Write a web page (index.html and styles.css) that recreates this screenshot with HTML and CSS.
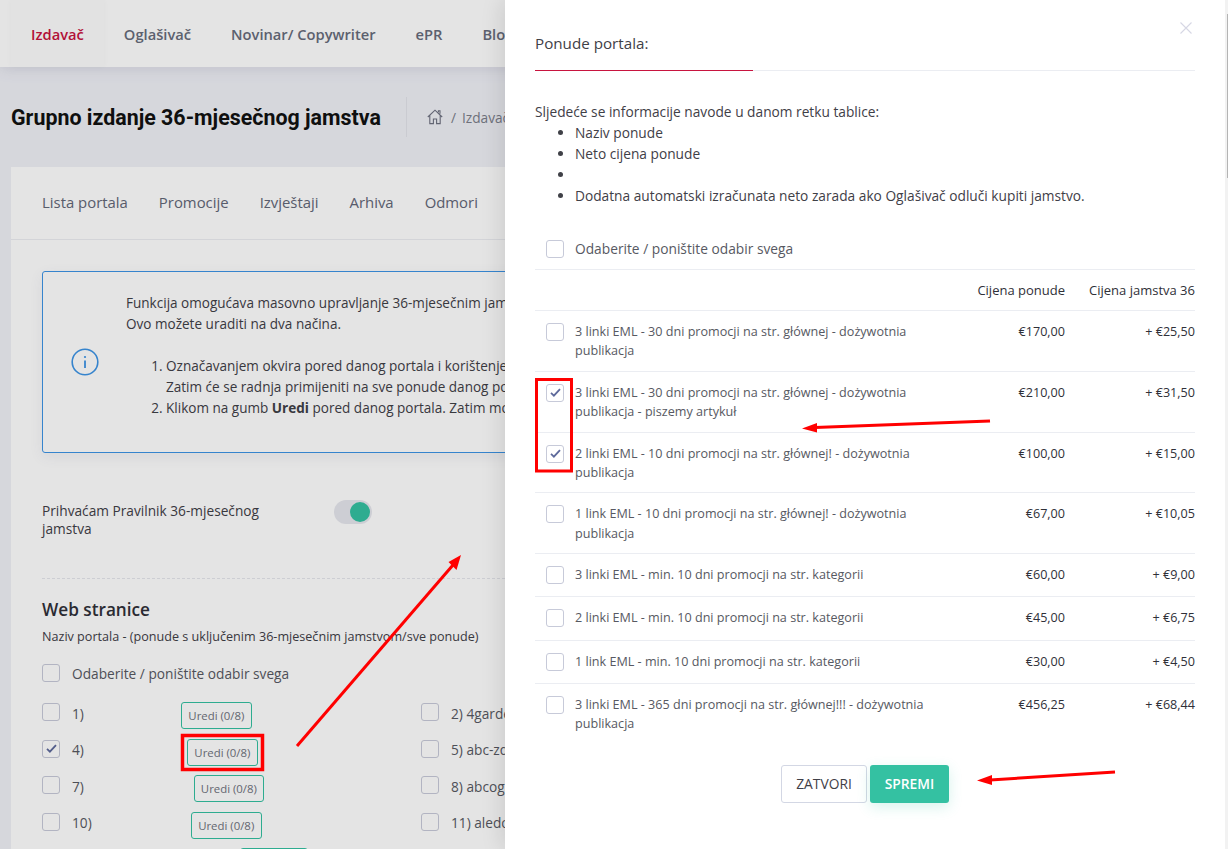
FILE: index.html
```html
<!DOCTYPE html>
<html lang="hr">
<head>
<meta charset="utf-8">
<title>Grupno izdanje 36-mjesečnog jamstva</title>
<link rel="stylesheet" href="styles.css">
</head>
<body>
<div class="page">
  <header class="topbar">
    <a class="topnav active">Izdavač</a>
    <a class="topnav">Oglašivač</a>
    <a class="topnav">Novinar/ Copywriter</a>
    <a class="topnav">ePR</a>
    <a class="topnav">Blog</a>
  </header>
  <div class="subheader">
    <h1 class="page-title">Grupno izdanje 36-mjesečnog jamstva</h1>
    <div class="crumbs">
      <svg class="home" viewBox="0 0 16 16" width="16" height="16"><path d="M.8 8 8 1.2 15.2 8M2.8 6.6V14.6H6.4V10H9.6V14.6H13.2V6.6M11.4 3.2V1.8H13V4.8" fill="none" stroke="currentColor" stroke-width="1.1"/></svg>
      <span>/</span><span>Izdavač</span>
    </div>
  </div>
  <main class="card">
    <nav class="tabs">
      <a>Lista portala</a><a>Promocije</a><a>Izvještaji</a><a>Arhiva</a><a>Odmori</a>
    </nav>
    <div class="card-body">
      <section class="alert">
        <div class="alert-icon">
          <svg viewBox="0 0 28 28" width="28" height="28"><circle cx="14" cy="14" r="12.8" fill="none" stroke="currentColor" stroke-width="1.6"/><path d="M14 12.5V20" stroke="currentColor" stroke-width="1.8"/><circle cx="14" cy="9" r="1.1" fill="currentColor"/></svg>
        </div>
        <div class="alert-text">
          <p>Funkcija omogućava masovno upravljanje 36-mjesečnim jamstvom na portalima.<br>Ovo možete uraditi na dva načina.</p>
          <ol>
            <li>Označavanjem okvira pored danog portala i korištenjem opcije ispod.<br>Zatim će se radnja primijeniti na sve ponude danog portala.</li>
            <li>Klikom na gumb <b>Uredi</b> pored danog portala. Zatim možete odabrati ponude.</li>
          </ol>
        </div>
      </section>
      <div class="accept">
        <label class="accept-label">Prihvaćam Pravilnik 36-mjesečnog jamstva</label>
        <span class="switch"><i></i></span>
      </div>
      <h2 class="section-title">Web stranice</h2>
      <p class="section-sub">Naziv portala - (ponude s uključenim 36-mjesečnim jamstvom/sve ponude)</p>
      <div class="check-row select-all"><span class="cb"></span><span>Odaberite / poništite odabir svega</span></div>
      <div class="portals">
        <div class="portal"><span class="cb"></span><span class="pname">1)</span><button class="edit e1">Uredi (0/8)</button></div>
        <div class="portal"><span class="cb"></span><span class="pname">2) 4gardeners.pl</span></div>
        <div class="portal"><span class="cb on"><svg viewBox="0 0 12 10" width="11" height="9"><path d="M1 5.5 4.2 8.5 11 1.2" fill="none" stroke="currentColor" stroke-width="2"/></svg></span><span class="pname">4)</span><button class="edit e2">Uredi (0/8)</button></div>
        <div class="portal"><span class="cb"></span><span class="pname">5) abc-zdrowie.pl</span></div>
        <div class="portal"><span class="cb"></span><span class="pname">7)</span><button class="edit e3">Uredi (0/8)</button></div>
        <div class="portal"><span class="cb"></span><span class="pname">8) abcogrodu.pl</span></div>
        <div class="portal"><span class="cb"></span><span class="pname">10)</span><button class="edit e4">Uredi (0/8)</button></div>
        <div class="portal"><span class="cb"></span><span class="pname">11) aledobre.pl</span></div>
        <div class="portal"><span class="cb"></span><span class="pname"></span><button class="edit e5" aria-label="Uredi"></button></div>
      </div>
    </div>
  </main>

  <div class="backdrop"></div>

  <aside class="panel">
    <div class="panel-inner">
      <button class="close" aria-label="Zatvori"><svg viewBox="0 0 12 12" width="12" height="12"><path d="M.5.5 11.500 11.500M11.500.5 .5 11.500" stroke="currentColor" stroke-width="1.100"/></svg></button>
      <div class="panel-head"><span>Ponude portala:</span></div>
      <p class="intro">Sljedeće se informacije navode u danom retku tablice:</p>
      <ul class="intro-list">
        <li>Naziv ponude</li>
        <li>Neto cijena ponude</li>
        <li>&nbsp;</li>
        <li>Dodatna automatski izračunata neto zarada ako Oglašivač odluči kupiti jamstvo.</li>
      </ul>
      <div class="offer-all"><span class="cb"></span><span>Odaberite / poništite odabir svega</span></div>
      <div class="offer-head"><span class="price">Cijena ponude</span><span class="guar">Cijena jamstva 36</span></div>
      <div class="offers">
        <div class="offer"><span class="cb"></span><span class="otext">3 linki EML - 30 dni promocji na str. głównej - dożywotnia publikacja</span><span class="price">€170,00</span><span class="guar">+ €25,50</span></div>
        <div class="offer"><span class="cb on"><svg viewBox="0 0 12 10" width="11" height="9"><path d="M1 5.5 4.2 8.5 11 1.2" fill="none" stroke="currentColor" stroke-width="2"/></svg></span><span class="otext">3 linki EML - 30 dni promocji na str. głównej - dożywotnia publikacja - piszemy artykuł</span><span class="price">€210,00</span><span class="guar">+ €31,50</span></div>
        <div class="offer"><span class="cb on"><svg viewBox="0 0 12 10" width="11" height="9"><path d="M1 5.5 4.2 8.5 11 1.2" fill="none" stroke="currentColor" stroke-width="2"/></svg></span><span class="otext">2 linki EML - 10 dni promocji na str. głównej! - dożywotnia publikacja</span><span class="price">€100,00</span><span class="guar">+ €15,00</span></div>
        <div class="offer"><span class="cb"></span><span class="otext">1 link EML - 10 dni promocji na str. głównej! - dożywotnia publikacja</span><span class="price">€67,00</span><span class="guar">+ €10,05</span></div>
        <div class="offer"><span class="cb"></span><span class="otext">3 linki EML - min. 10 dni promocji na str. kategorii</span><span class="price">€60,00</span><span class="guar">+ €9,00</span></div>
        <div class="offer"><span class="cb"></span><span class="otext">2 linki EML - min. 10 dni promocji na str. kategorii</span><span class="price">€45,00</span><span class="guar">+ €6,75</span></div>
        <div class="offer"><span class="cb"></span><span class="otext">1 link EML - min. 10 dni promocji na str. kategorii</span><span class="price">€30,00</span><span class="guar">+ €4,50</span></div>
        <div class="offer"><span class="cb"></span><span class="otext">3 linki EML - 365 dni promocji na str. głównej!!! - dożywotnia publikacja</span><span class="price">€456,25</span><span class="guar">+ €68,44</span></div>
      </div>
      <div class="actions"><button class="btn-light">ZATVORI</button><button class="btn-save">SPREMI</button></div>
    </div>
    <div class="scrollbar"><i></i></div>
  </aside>

  <svg class="marks" viewBox="0 0 1228 849" width="1228" height="849" fill="none">
    <g fill="#f00">
      <path d="M297 746 453 565" stroke="#f00" stroke-width="3"/>
      <path d="M461 555 456.500 570 448.500 562Z"/>
      <path d="M990 421 815 427.500" stroke="#f00" stroke-width="3"/>
      <path d="M802 428.500 817 423 817 432.500Z"/>
      <path d="M1115 772 990 780" stroke="#f00" stroke-width="3"/>
      <path d="M977 780.500 992 775 992 785Z"/>
    </g>
    <rect x="182.500" y="735.500" width="80" height="34" stroke="#f00" stroke-width="3.500"/>
    <rect x="536.500" y="379.500" width="35" height="91.500" stroke="#f00" stroke-width="3"/>
  </svg>
</div>
</body>
</html>
```
FILE: styles.css
```css
* { box-sizing: border-box; }
html, body { margin: 0; padding: 0; height: 100%; overflow: hidden; }
body { font-family: "Open Sans", "Liberation Sans", sans-serif; font-size: 14px; color: #3f4047; background: #f0f1f7; }
.page { position: relative; width: 1228px; height: 849px; overflow: hidden; background: #f0f1f7; }

/* top navigation */
.topbar { display: flex; height: 67px; padding-left: 11px; background: #fff; box-shadow: 0 2px 14px rgba(80, 80, 120, .14); font-weight: 600; white-space: nowrap; }
.topnav { display: flex; align-items: center; padding: 0 20px; color: #676c7b; font-size: 14.700px; }
.topnav.active { background: #fdfdfd; color: #c8143f; box-shadow: 0 0 6px rgba(0, 0, 0, .03); }

/* page heading */
.subheader { display: flex; align-items: center; height: 100px; padding-left: 11px; white-space: nowrap; }
.page-title { margin: 0; padding-right: 25px; height: 40px; line-height: 42px; border-right: 1px solid #e2e3ea; font-family: Roboto, sans-serif; font-size: 21.400px; font-weight: 700; color: #111; }
.crumbs { display: flex; align-items: center; gap: 6px; padding-left: 20px; color: #7b7e8a; font-size: 13.700px; }
.home { color: #6d7080; margin-right: 2px; }

/* main card */
.card { margin-left: 11px; width: 1300px; height: 720px; background: #fff; }
.tabs { display: flex; gap: 31px; height: 73px; padding: 0 31px 2px; align-items: center; border-bottom: 1px solid #ecedf2; color: #636778; font-size: 14.900px; }
.card-body { padding: 31px 31px 0; }
.alert { display: flex; width: 900px; height: 182px; border: 1px solid #3d94e6; border-radius: 3px; box-shadow: 0 4px 14px rgba(80, 80, 120, .08); white-space: nowrap; font-size: 13.550px; line-height: 21px; color: #3f4047; }
.alert-icon { flex: 0 0 83px; padding-left: 28px; display: flex; align-items: center; color: #3d94e6; }
.alert-text { padding-top: 21px; }
.alert-text p { margin: 0 0 21px; }
.alert-text ol { margin: 0; padding-left: 40px; }
.accept { display: flex; align-items: flex-start; margin-top: 49px; height: 77px; border-bottom: 1px dashed #e6e7ec; }
.accept-label { width: 260px; font-size: 13.700px; line-height: 18px; color: #3f4047; }
.switch { position: relative; display: block; width: 38px; height: 24px; margin: -2px 0 0 32px; border-radius: 12px; background: #e6e7ee; }
.switch i { position: absolute; right: 2px; top: 2px; width: 20px; height: 20px; border-radius: 50%; background: #34c1a2; }
.section-title { margin: 19px 0 0; font-size: 17.200px; line-height: 24px; font-weight: 600; color: #2f3038; }
.section-sub { margin: 6px 0 0; font-size: 12.600px; line-height: 18px; color: #3f4047; white-space: nowrap; }

/* checkboxes */
.cb { flex: none; display: flex; align-items: center; justify-content: center; width: 18px; height: 18px; border: 1px solid #c7cad9; border-radius: 3px; background: #fff; color: #5e6a9c; }
.check-row { display: flex; align-items: center; gap: 12px; color: #575962; }
.select-all { margin-top: 18px; height: 18px; font-size: 13.700px; }

/* portal list */
.portals { display: grid; grid-template-columns: 379px 379px; grid-auto-rows: 36.500px; margin-top: 21px; width: 758px; }
.portal { display: flex; align-items: flex-start; gap: 12px; font-size: 13.700px; color: #575962; white-space: nowrap; }
.pname { margin-top: 1.500px; line-height: 18px; min-width: 0; }
.edit { flex: none; height: 27px; padding: 0; width: 71px; border: 1px solid #34c1a2; border-radius: 3px; background: #fff; color: #6f727d; font: 11.400px "Open Sans", sans-serif; margin-top: -1px; }
.e1 { margin-left: 85px; }
.e2 { margin-left: 91px; }
.e3 { margin-left: 98px; width: 70px; }
.e4 { margin-left: 87px; }
.e5 { margin-left: 156px; width: 68px; }

.backdrop { position: absolute; inset: 0; background: rgba(0, 0, 0, .105); }

/* side panel */
.panel { position: absolute; top: 0; right: 0; bottom: 0; width: 723px; display: flex; background: #fff; box-shadow: -4px 0 20px rgba(0, 0, 0, .1); }
.panel-inner { position: relative; flex: 1; padding: 0 30px; }
.close { position: absolute; top: 22px; right: 33px; padding: 0; width: 12px; height: 12px; border: 0; background: none; color: #d6d7e4; display: flex; }
.scrollbar { flex: 0 0 3px; padding-top: 14px; background: #f2f2f2; }
.scrollbar i { display: block; width: 1.500px; margin-left: 1.500px; height: 164px; background: #b4b4b4; }
.panel-head { height: 71px; border-bottom: 1px solid #ebedf2; display: flex; }
.panel-head span { width: 218px; height: 71px; padding-top: 33px; line-height: 20px; border-bottom: 1px solid #c8143f; font-size: 15.200px; color: #3f4047; }
.intro { margin: 30px 0 0; line-height: 21px; font-size: 13.720px; color: #3f4047; }
.intro-list { margin: 0; padding-left: 40px; line-height: 21px; font-size: 13.720px; color: #3f4047; }
.offer-all { display: flex; align-items: center; gap: 11px; height: 64px; padding: 22px 0 0 11px; border-bottom: 1px solid #ebedf2; font-size: 13.750px; color: #575962; }
.offer-head { display: flex; align-items: center; justify-content: flex-end; height: 41px; border-bottom: 1px solid #ebedf2; font-size: 13px; color: #2f3038; }
.offer { display: flex; align-items: flex-start; min-height: 43.330px; padding: 11px 0 10.250px 11px; border-bottom: 1px solid #ebedf2; font-size: 12.600px; line-height: 19.250px; color: #575962; }
.offer:last-child { border-bottom: 0; }
.offer > .cb { margin: 1px 11px 0 0; }
.otext { flex: 0 0 350px; }
.price { flex: 1 1 auto; text-align: right; color: #2f3038; font-weight: 500; }
.guar { flex: 0 0 130px; text-align: right; color: #2f3038; font-weight: 500; }
.actions { display: flex; justify-content: center; gap: 3px; margin-top: 21px; }
.btn-light, .btn-save { height: 38px; padding: 0; border-radius: 3px; font: 13.800px "Open Sans", sans-serif; cursor: pointer; }
.btn-light { width: 86px; border: 1px solid #d3d7e4; background: #fff; color: #3f4047; }
.btn-save { width: 79px; border: 0; background: #34c1a2; color: #fff; font-weight: 600; box-shadow: 0 4px 14px rgba(52, 193, 162, .2); }

/* annotation overlay */
.marks { position: absolute; inset: 0; pointer-events: none; }
```
